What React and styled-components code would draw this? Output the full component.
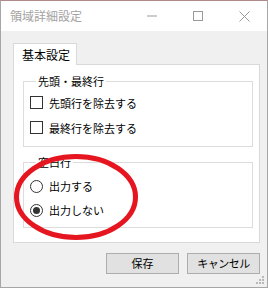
import React from 'react';
import styled, { createGlobalStyle } from 'styled-components';

const GlobalStyle = createGlobalStyle`
  html, body {
    margin: 0;
    padding: 0;
    background: #ffffff;
  }
  body {
    font-family: "Noto Sans CJK JP", "Noto Sans", sans-serif;
  }
`;

const Window = styled.div`
  position: relative;
  width: 268px;
  height: 288px;
  box-sizing: border-box;
  border: 1px solid #a6a6a6;
  border-top-color: #b08a8a;
  background: #f0f0f0;
  display: flex;
  flex-direction: column;
  overflow: hidden;
`;

const TitleBar = styled.div`
  height: 30px;
  background: #ffffff;
  display: flex;
  align-items: center;
`;

const Title = styled.div`
  flex: 1;
  padding-left: 9px;
  font-size: 12px;
  color: #a3a3a3;
  line-height: 30px;
`;

const Ctrl = styled.div`
  width: 46px;
  height: 30px;
  display: flex;
  align-items: center;
  justify-content: center;
`;

const Body = styled.div`
  flex: 1;
  display: flex;
  flex-direction: column;
  padding: 12px 7px 0 12px;
`;

const Tab = styled.div`
  align-self: flex-start;
  width: 64px;
  height: 22px;
  box-sizing: border-box;
  border: 1px solid #d9d9d9;
  border-bottom: none;
  background: #ffffff;
  font-size: 12px;
  line-height: 21px;
  padding-left: 8px;
  color: #000;
  margin-bottom: -1px;
  position: relative;
  z-index: 1;
`;

const Panel = styled.div`
  height: 179px;
  box-sizing: border-box;
  border: 1px solid #d9d9d9;
  background: #ffffff;
  padding: 8px 6px 0 9px;
  display: flex;
  flex-direction: column;
  gap: 7px;
`;

const Group = styled.fieldset`
  margin: 0;
  border: 1px solid #dcdcdc;
  padding: ${p => p.$pt}px 6px ${p => p.$pb}px 6px;
  min-width: 0;
`;

const Legend = styled.legend`
  font-size: 11px;
  line-height: 16px;
  height: 16px;
  padding: 0 2px;
  margin-left: 6px;
  color: #000;
`;

const Row = styled.label`
  height: ${p => p.$h}px;
  display: flex;
  align-items: center;
  gap: 6px;
  font-size: 11px;
  color: #000;
`;

const Check = styled.span`
  width: 13px;
  height: 13px;
  box-sizing: border-box;
  border: 1px solid #333;
  background: #fff;
`;

const Radio = styled.span`
  width: 13px;
  height: 13px;
  box-sizing: border-box;
  border: 1px solid #333;
  border-radius: 50%;
  background: #fff;
  display: flex;
  align-items: center;
  justify-content: center;
  &::after {
    content: '';
    width: 7px;
    height: 7px;
    border-radius: 50%;
    background: ${p => (p.$on ? '#333' : 'transparent')};
  }
`;

const Buttons = styled.div`
  display: flex;
  justify-content: flex-end;
  gap: 8px;
  padding-top: 10px;
`;

const Button = styled.button`
  width: 73px;
  height: 21px;
  box-sizing: border-box;
  border: 1px solid #adadad;
  background: #e1e1e1;
  font-family: "Noto Sans CJK JP", sans-serif;
  font-size: 11px;
  letter-spacing: ${p => p.$ls || 0}px;
  color: #000;
  padding: 0;
  line-height: 19px;
`;

const Grip = styled.svg`
  position: absolute;
  right: 2px;
  bottom: 2px;
`;

const Mark = styled.svg`
  position: absolute;
  left: 12px;
  top: 151px;
  pointer-events: none;
`;

export default function App() {
  return (
    <>
      <GlobalStyle />
      <Window>
        <TitleBar>
          <Title>領域詳細設定</Title>
          <Ctrl>
            <svg width="12" height="2"><line x1="1" y1="1" x2="11" y2="1" stroke="#999" strokeWidth="1" /></svg>
          </Ctrl>
          <Ctrl>
            <svg width="11" height="11"><rect x="0.5" y="0.5" width="9" height="9" fill="none" stroke="#999" /></svg>
          </Ctrl>
          <Ctrl>
            <svg width="11" height="11"><path d="M0.5 0.5 L10.5 10.5 M10.5 0.5 L0.5 10.5" stroke="#999" strokeWidth="1" /></svg>
          </Ctrl>
        </TitleBar>
        <Body>
          <Tab>基本設定</Tab>
          <Panel>
            <Group $pt={1} $pb={6}>
              <Legend>先頭・最終行</Legend>
              <Row $h={25}><Check />先頭行を除去する</Row>
              <Row $h={25}><Check />最終行を除去する</Row>
            </Group>
            <Group $pt={4} $pb={5}>
              <Legend>空白行</Legend>
              <Row $h={24}><Radio />出力する</Row>
              <Row $h={24}><Radio $on />出力しない</Row>
            </Group>
          </Panel>
          <Buttons>
            <Button>保存</Button>
            <Button $ls={-0.5}>キャンセル</Button>
          </Buttons>
        </Body>
        <Grip width="10" height="10">
          {[[8, 2], [5, 5], [8, 5], [2, 8], [5, 8], [8, 8]].map(([x, y]) => (
            <rect key={`${x}-${y}`} x={x - 1} y={y - 1} width="2" height="2" fill="#b8b8b8" />
          ))}
        </Grip>
        <Mark width="128" height="90">
          <ellipse cx="63" cy="45" rx="59.5" ry="40.5" fill="none" stroke="#e5161f" strokeWidth="5" />
        </Mark>
      </Window>
    </>
  );
}
